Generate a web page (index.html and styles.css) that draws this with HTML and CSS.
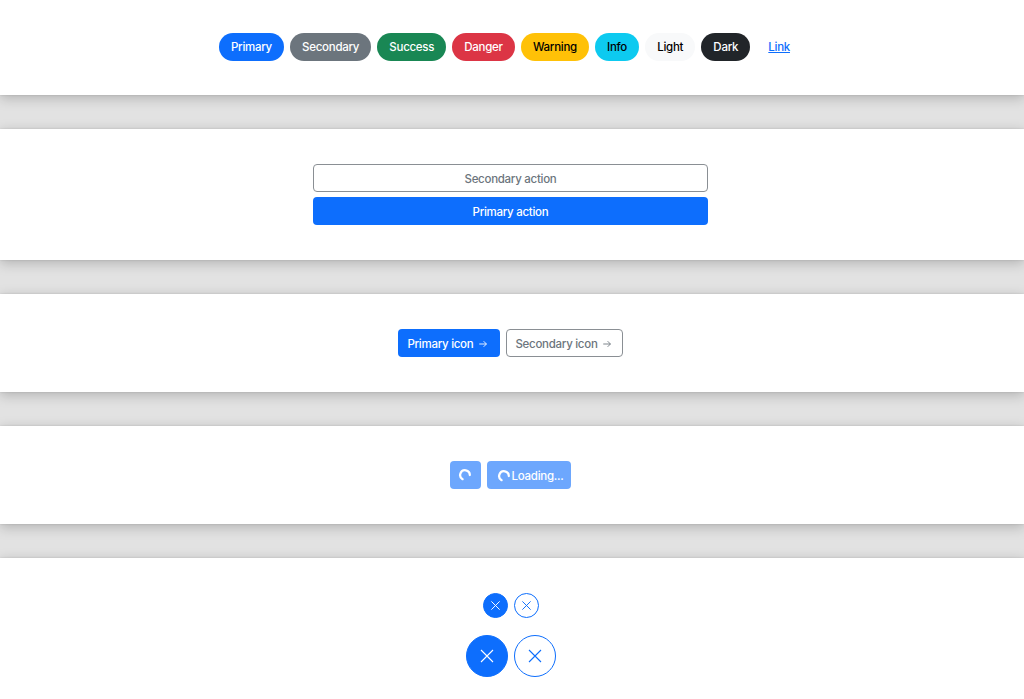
FILE: index.html
```html
<!DOCTYPE html>
<html lang="en">
<head>
<meta charset="utf-8">
<title>Buttons</title>
<link rel="stylesheet" href="styles.css">
</head>
<body>
<main class="page">
  <section class="panel panel-first">
    <div class="row">
      <button class="btn pill primary">Primary</button>
      <button class="btn pill secondary">Secondary</button>
      <button class="btn pill success">Success</button>
      <button class="btn pill danger">Danger</button>
      <button class="btn pill warning">Warning</button>
      <button class="btn pill info">Info</button>
      <button class="btn pill light">Light</button>
      <button class="btn pill dark">Dark</button>
      <a class="btn pill link" href="#">Link</a>
    </div>
  </section>
  <section class="panel">
    <div class="stack">
      <button class="btn outline">Secondary action</button>
      <button class="btn primary">Primary action</button>
    </div>
  </section>
  <section class="panel">
    <div class="row">
      <button class="btn primary icon-btn">Primary icon
        <svg class="arrow" viewBox="0 0 16 16" aria-hidden="true"><path d="M2 8h11.5M9 3.5 13.5 8 9 12.5"/></svg>
      </button>
      <button class="btn outline icon-btn">Secondary icon
        <svg class="arrow" viewBox="0 0 16 16" aria-hidden="true"><path d="M2 8h11.5M9 3.5 13.5 8 9 12.5"/></svg>
      </button>
    </div>
  </section>
  <section class="panel">
    <div class="row">
      <button class="btn primary disabled square"><svg class="spinner" viewBox="0 0 16 16" aria-hidden="true"><path d="M13.5 8A5.5 5.5 0 1 0 5.25 12.76"/></svg></button>
      <button class="btn primary disabled loading"><svg class="spinner" viewBox="0 0 16 16" aria-hidden="true"><path d="M13.5 8A5.5 5.5 0 1 0 5.25 12.76"/></svg>Loading...</button>
    </div>
  </section>
  <section class="panel panel-last">
    <div class="row">
      <button class="round small fill" aria-label="Close"><svg class="x" viewBox="0 0 16 16"><path d="M2 2l12 12M14 2 2 14"/></svg></button>
      <button class="round small ring" aria-label="Close"><svg class="x" viewBox="0 0 16 16"><path d="M2 2l12 12M14 2 2 14"/></svg></button>
    </div>
    <div class="row">
      <button class="round large fill" aria-label="Close"><svg class="x" viewBox="0 0 16 16"><path d="M2 2l12 12M14 2 2 14"/></svg></button>
      <button class="round large ring" aria-label="Close"><svg class="x" viewBox="0 0 16 16"><path d="M2 2l12 12M14 2 2 14"/></svg></button>
    </div>
  </section>
</main>
</body>
</html>
```
FILE: styles.css
```css
* { box-sizing: border-box; }
html, body { margin: 0; height: 699px; overflow: hidden; }
body { background: #e2e2e2; font-family: Inter, "Liberation Sans", sans-serif; font-size: 12px; }
.page { display: flex; flex-direction: column; gap: 34px; }
.panel {
  background: #fff;
  padding: 35px 3px 35px 0;
  display: flex;
  flex-direction: column;
  align-items: center;
  box-shadow: 0 3px 12px rgba(0, 0, 0, .22), 0 0 2px rgba(0, 0, 0, .12);
}
.panel-first { padding: 33px 3px 34px 0; }
.panel-last { gap: 17px; }
.row { display: flex; justify-content: center; gap: 6px; }
.stack { display: flex; flex-direction: column; gap: 5px; width: 395px; }
.btn {
  font: 450 11.5px/16px Inter, "Liberation Sans", sans-serif;
  letter-spacing: -.28px;
  height: 28px;
  padding: 2px 9px 0;
  border: 1px solid transparent;
  border-radius: 4px;
  display: inline-flex;
  align-items: center;
  justify-content: center;
}
.pill { border-radius: 14px; padding: 0 11.1px; }
.primary { background: #0d6efd; color: #fff; }
.secondary { background: #6c757d; color: #fff; }
.success { background: #198754; color: #fff; }
.danger { background: #dc3545; color: #fff; }
.warning { background: #ffc107; color: #000; }
.info { background: #0dcaf0; color: #000; }
.light { background: #f8f9fa; color: #000; }
.dark { background: #212529; color: #fff; }
.link { color: #0d6efd; text-decoration: underline; background: none; }
.outline { background: #fff; color: #6c757d; border-color: #8a8f94; }
.icon-btn { gap: 5px; padding: 2px 11px 0 8px; }
.icon-btn.outline { gap: 4px; padding-right: 10px; }
.arrow { width: 10px; height: 10px; fill: none; stroke: currentColor; stroke-width: 1.4; }
.disabled { opacity: .6; }
.square { width: 31px; padding: 0; }
.loading { gap: 1px; padding: 2px 7px 0 9px; }
.spinner { width: 14px; height: 14px; fill: none; stroke: #fff; stroke-width: 2.6; stroke-linecap: round; }
.round {
  display: flex;
  align-items: center;
  justify-content: center;
  padding: 0;
  border-radius: 50%;
  border: 1px solid #0d6efd;
}
.small { width: 25px; height: 25px; }
.large { width: 42px; height: 42px; }
.fill { background: #0d6efd; color: #fff; }
.ring { background: #fff; color: #0d6efd; }
.x { fill: none; stroke: currentColor; stroke-width: 1; }
.small .x { width: 11px; height: 11px; stroke-width: 1.4; }
.large .x { width: 16px; height: 16px; stroke-width: 1.1; }
```
